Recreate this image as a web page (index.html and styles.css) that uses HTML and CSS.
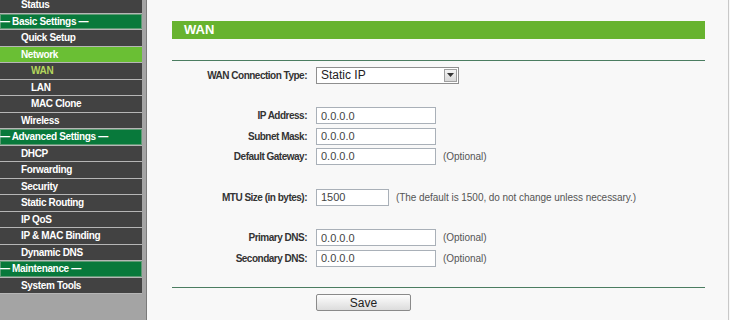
FILE: index.html
```html
<!DOCTYPE html>
<html lang="en">
<head>
  <meta charset="UTF-8">
  <title>WAN</title>
  <link rel="stylesheet" href="styles.css">
</head>
<body>
  <div class="sidebar">
    <ul class="menu">
      <li class="item">Status</li>
      <li class="group">&mdash; Basic Settings &mdash;</li>
      <li class="item">Quick Setup</li>
      <li class="item active">Network</li>
      <li class="item sub current">WAN</li>
      <li class="item sub">LAN</li>
      <li class="item sub">MAC Clone</li>
      <li class="item">Wireless</li>
      <li class="group">&mdash; Advanced Settings &mdash;</li>
      <li class="item">DHCP</li>
      <li class="item">Forwarding</li>
      <li class="item">Security</li>
      <li class="item">Static Routing</li>
      <li class="item">IP QoS</li>
      <li class="item">IP &amp; MAC Binding</li>
      <li class="item">Dynamic DNS</li>
      <li class="group">&mdash; Maintenance &mdash;</li>
      <li class="item">System Tools</li>
    </ul>
  </div>

  <div class="main">
    <div class="title">WAN</div>
    <div class="rule"></div>

    <form class="form">
      <label class="label">WAN Connection Type:</label>
      <div class="field">
        <div class="select">
          <span class="select-text">Static IP</span>
          <span class="select-btn">
            <svg width="7" height="4" viewBox="0 0 7 4"><path d="M0 0h7L3.5 4z" fill="#333"/></svg>
          </span>
        </div>
      </div>

      <div class="blank"></div>

      <label class="label">IP Address:</label>
      <div class="field"><input class="text" type="text" value="0.0.0.0"></div>

      <label class="label">Subnet Mask:</label>
      <div class="field"><input class="text" type="text" value="0.0.0.0"></div>

      <label class="label">Default Gateway:</label>
      <div class="field"><input class="text" type="text" value="0.0.0.0"><span class="note">(Optional)</span></div>

      <div class="blank"></div>

      <label class="label">MTU Size (in bytes):</label>
      <div class="field"><input class="text short" type="text" value="1500"><span class="note">(The default is 1500, do not change unless necessary.)</span></div>

      <div class="blank"></div>

      <label class="label">Primary DNS:</label>
      <div class="field"><input class="text" type="text" value="0.0.0.0"><span class="note">(Optional)</span></div>

      <label class="label">Secondary DNS:</label>
      <div class="field"><input class="text" type="text" value="0.0.0.0"><span class="note">(Optional)</span></div>
    </form>

    <div class="rule bottom"></div>

    <div class="actions">
      <button type="button" class="save">Save</button>
    </div>
  </div>
</body>
</html>
```

FILE: styles.css
```css
body {
  margin: 0;
  padding: 0;
  display: flex;
  height: 320px;
  overflow: hidden;
  font-family: Tahoma, 'Liberation Sans', Arial, sans-serif;
  font-size: 11px;
  background-color: #f8f8f8;
}
.sidebar {
  width: 146px;
  flex-shrink: 0;
  background-color: #a4a4a4;
  border-right: 1px solid #7a7a7a;
  overflow: hidden;
}
.menu {
  list-style: none;
  margin: -3px 0 0 0;
  padding: 0;
  width: 142px;
}
.menu li {
  height: 15.5px;
  line-height: 15.5px;
  border-bottom: 1px solid #b6b6b6;
  color: #fff;
  font-weight: bold;
  font-size: 10px;
  letter-spacing: -0.35px;
  white-space: nowrap;
}
.item {
  background-color: #424242;
  padding-left: 21px;
}
.item.sub {
  padding-left: 31px;
}
.item.active {
  background-color: #6abf34;
}
.item.current {
  color: #b3d65c;
}
.group {
  background-color: #08793b;
  padding-left: 0;
  box-shadow: inset 0 0 0 1px #5c9b73;
}
.main {
  flex: 1;
  border-right: 1px solid #c8c8c8;
  margin-right: 1px;
  padding: 21px 23px 0 25px;
}
.title {
  background-color: #67b32f;
  color: #fff;
  font-weight: bold;
  font-size: 13px;
  height: 18px;
  line-height: 18px;
  padding-left: 12px;
}
.rule {
  height: 1px;
  background-color: #4b7d61;
  margin-top: 21px;
}
.rule.bottom {
  margin-top: 19px;
}
.form {
  display: grid;
  grid-template-columns: 135px 1fr;
  column-gap: 9px;
  grid-auto-rows: 20.33px;
  margin-top: 4px;
}
.label {
  font-weight: bold;
  font-size: 10px;
  letter-spacing: -0.5px;
  color: #333;
  text-align: right;
  align-self: center;
}
.field {
  display: flex;
  align-items: center;
  gap: 7px;
}
.blank {
  grid-column: 1 / 3;
}
.text {
  box-sizing: border-box;
  width: 120px;
  height: 17px;
  margin: 0;
  padding: 0 4px;
  border: 1px solid #a9b0b8;
  background-color: #fff;
  color: #444;
  font-family: Tahoma, 'Liberation Sans', Arial, sans-serif;
  font-size: 11px;
}
.text.short {
  width: 73px;
}
.note {
  color: #555;
  font-size: 10px;
  letter-spacing: -0.05px;
}
.select {
  box-sizing: border-box;
  width: 143px;
  height: 17px;
  border: 1px solid #8f8f8f;
  background-color: #fff;
  display: flex;
  align-items: center;
  justify-content: space-between;
  color: #222;
  font-size: 12px;
}
.select-text {
  padding-left: 4px;
}
.select-btn {
  width: 13px;
  height: 13px;
  margin-right: 1px;
  box-sizing: border-box;
  border: 1px solid #a0a0a0;
  background: linear-gradient(#f4f4f4, #d8d8d8);
  display: flex;
  align-items: center;
  justify-content: center;
}
.actions {
  padding-left: 144px;
  margin-top: 6px;
}
.save {
  width: 95px;
  height: 17px;
  padding: 0;
  border: 1px solid #8a8a8a;
  border-radius: 2px;
  background: linear-gradient(#fdfdfd, #dcdcdc);
  color: #222;
  font-family: Tahoma, 'Liberation Sans', Arial, sans-serif;
  font-size: 12px;
}
```
